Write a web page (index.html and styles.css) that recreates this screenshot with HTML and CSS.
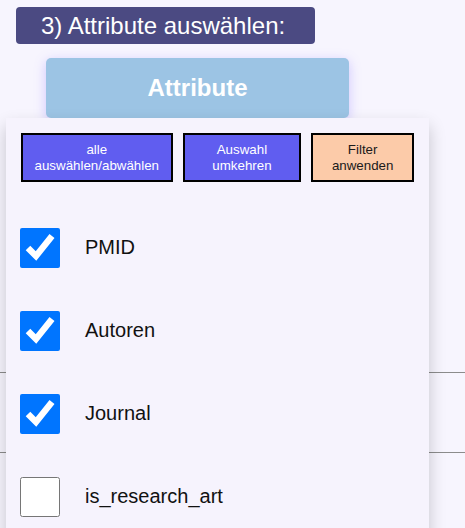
FILE: index.html
```html
<!DOCTYPE html>
<html lang="de">
<head>
<meta charset="utf-8">
<link rel="stylesheet" href="styles.css">
</head>
<body>
<div class="page">
  <div class="step-title">3) Attribute auswählen:</div>
  <div class="dropdown">
    <button class="drop-btn">Attribute</button>
    <div class="drop-panel">
      <div class="actions">
        <button class="act act-all">alle<br>auswählen/abwählen</button>
        <button class="act act-invert">Auswahl<br>umkehren</button>
        <button class="act act-apply">Filter<br>anwenden</button>
      </div>
      <div class="checklist">
        <label class="item"><input type="checkbox" checked><span>PMID</span></label>
        <label class="item"><input type="checkbox" checked><span>Autoren</span></label>
        <label class="item"><input type="checkbox" checked><span>Journal</span></label>
        <label class="item"><input type="checkbox"><span>is_research_art</span></label>
      </div>
    </div>
  </div>
  <div class="rows">
    <div class="row"></div>
    <div class="row"></div>
    <div class="row"></div>
  </div>
</div>
</body>
</html>
```
FILE: styles.css
```css
html, body {
  margin: 0;
  padding: 0;
  background: #f7f5fe;
  font-family: "Liberation Sans", Arial, sans-serif;
  overflow: hidden;
}

.page {
  padding-top: 7px;
}

.step-title {
  margin-left: 16px;
  width: 299px;
  height: 37px;
  box-sizing: border-box;
  padding-left: 25px;
  background: #4b4a82;
  border-radius: 4px;
  color: #ffffff;
  font-size: 24px;
  line-height: 37px;
}

.dropdown {
  position: relative;
  margin-left: 46px;
  margin-top: 14px;
  width: 303px;
}

.drop-btn {
  display: block;
  width: 303px;
  height: 60px;
  margin: 0;
  padding: 0;
  border: none;
  border-radius: 5px;
  background: #9cc4e4;
  color: #ffffff;
  font-family: "Liberation Sans", Arial, sans-serif;
  font-size: 24px;
  font-weight: bold;
  box-shadow: 0 3px 12px rgba(130, 110, 255, 0.35);
}

.drop-panel {
  position: absolute;
  top: 100%;
  left: -40px;
  width: 423px;
  height: 420px;
  box-sizing: border-box;
  padding: 15px 15px 0 15px;
  background: #f6f3fd;
  box-shadow: 0 8px 16px rgba(0, 0, 0, 0.2);
  z-index: 10;
}

.actions {
  display: flex;
  gap: 10px;
}

.act {
  height: 49px;
  margin: 0;
  padding: 0;
  border: 2px solid #000000;
  border-radius: 0;
  background: #605df0;
  color: #ffffff;
  font-family: "Liberation Sans", Arial, sans-serif;
  font-size: 13.333px;
  line-height: 15.33px;
  text-align: center;
}

.act-all { width: 152px; }
.act-invert { width: 119px; }
.act-apply {
  width: 103px;
  background: #fccba9;
  color: #1a1a1a;
}

.checklist {
  display: flex;
  flex-direction: column;
  gap: 43px;
  margin-top: 46px;
}

.item {
  display: flex;
  align-items: center;
  height: 40px;
}

.item input {
  width: 40px;
  height: 40px;
  margin: 0 0 0 -1px;
  flex: none;
}

.item span {
  margin-left: 25px;
  margin-bottom: 2px;
  font-size: 20px;
  color: #111111;
}

.rows {
  margin-top: 175px;
}

.row {
  height: 80px;
  box-sizing: border-box;
  border-bottom: 1px solid #8c8c8c;
}
```
